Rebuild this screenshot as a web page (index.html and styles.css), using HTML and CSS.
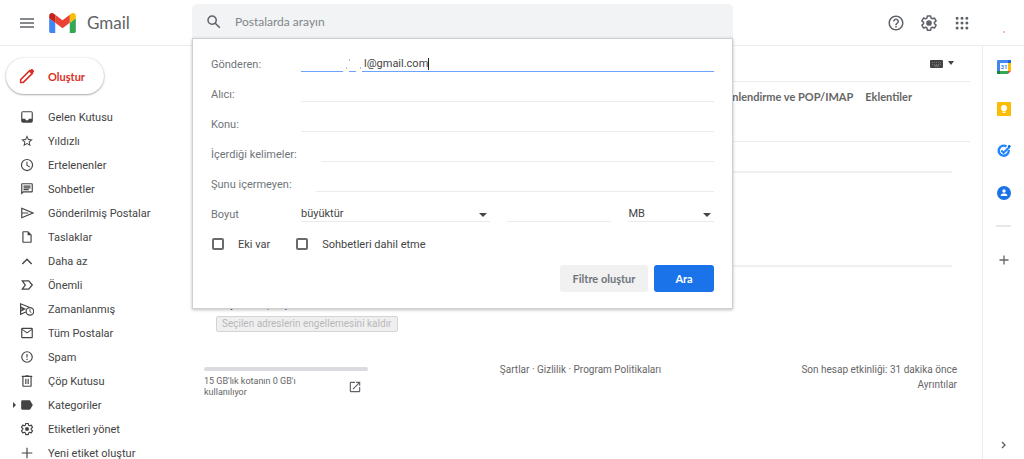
FILE: index.html
```html
<!DOCTYPE html>
<html lang="tr">
<head>
    <meta charset="UTF-8">
    <meta name="viewport" content="width=device-width, initial-scale=1.0">
    <title>Gmail</title>
    <link rel="stylesheet" href="styles.css">
</head>
<body>

    <header class="header">
        <div class="brand">
            <button class="icon-button" aria-label="Ana menü">
                <svg width="16" height="16" viewBox="0 0 16 16"><path d="M1 4h14M1 8h14M1 12h14" stroke="#5f6368" stroke-width="1.500"/></svg>
            </button>
            <a class="logo" href="#">
                <svg width="27" height="20" viewBox="52 42 88 66">
                    <path fill="#4285f4" d="M58 108h14V74L52 59v43c0 3.320 2.690 6 6 6"/>
                    <path fill="#34a853" d="M120 108h14c3.320 0 6-2.690 6-6V59l-20 15"/>
                    <path fill="#fbbc04" d="M120 48v26l20-15v-8c0-7.420-8.470-11.650-14.400-7.200"/>
                    <path fill="#ea4335" d="M72 74V48l24 18 24-18v26L96 92"/>
                    <path fill="#c5221f" d="M52 51v8l20 15V48l-5.600-4.200c-5.940-4.450-14.400-.22-14.400 7.200"/>
                </svg>
                <span>Gmail</span>
            </a>
        </div>

        <form class="search">
            <div class="search-bar">
                <svg width="18" height="18" viewBox="0 0 24 24" fill="#5f6368"><path d="M20.490 19l-5.730-5.730C15.530 12.200 16 10.910 16 9.500A6.500 6.500 0 1 0 9.500 16c1.410 0 2.700-.47 3.770-1.240L19 20.490 20.490 19zM5 9.500C5 7.010 7.010 5 9.500 5S14 7.010 14 9.500 11.990 14 9.500 14 5 11.990 5 9.500z"/></svg>
                <input type="text" placeholder="Postalarda arayın" aria-label="Postalarda arayın">
            </div>

            <div class="search-panel">
                <div class="field">
                    <label for="from">Gönderen:</label>
                    <div class="from-box">
                        <input class="from-input" type="text" id="from" value="l@gmail.com">
                        <svg class="from-marks" width="132" height="18" viewBox="0 0 132 18">
                            <ellipse cx="45" cy="15" rx="3" ry="3" fill="#fff"/>
                            <ellipse cx="58" cy="15" rx="3" ry="3" fill="#fff"/>
                            <path d="M45 12h1M59 12h1M48 4h1" stroke="#777"/>
                            <path d="M127.500 2v12" stroke="#222"/>
                        </svg>
                    </div>
                </div>
                <div class="field">
                    <label for="to">Alıcı:</label>
                    <input type="text" id="to">
                </div>
                <div class="field">
                    <label for="subject">Konu:</label>
                    <input type="text" id="subject">
                </div>
                <div class="field">
                    <label for="has">İçerdiği kelimeler:</label>
                    <input type="text" id="has">
                </div>
                <div class="field">
                    <label for="not">Şunu içermeyen:</label>
                    <input type="text" id="not">
                </div>
                <div class="field size-field">
                    <label for="size-op">Boyut</label>
                    <div class="select-box size-op">
                        <select id="size-op"><option>büyüktür</option><option>küçüktür</option></select>
                    </div>
                    <input type="text" aria-label="Boyut değeri">
                    <div class="select-box size-unit">
                        <select aria-label="Birim"><option>MB</option><option>KB</option></select>
                    </div>
                </div>
                <div class="checks">
                    <label><input type="checkbox">Eki var</label>
                    <label><input type="checkbox">Sohbetleri dahil etme</label>
                </div>
                <div class="actions">
                    <button type="button" class="btn-filter">Filtre oluştur</button>
                    <button type="submit" class="btn-search">Ara</button>
                </div>
            </div>
        </form>

        <div class="header-tools">
            <button class="icon-button" aria-label="Destek">
                <svg width="18" height="18" viewBox="0 0 24 24" fill="#5f6368"><path d="M11 18h2v-2h-2v2zm1-16C6.480 2 2 6.480 2 12s4.480 10 10 10 10-4.480 10-10S17.520 2 12 2zm0 18c-4.410 0-8-3.590-8-8s3.590-8 8-8 8 3.590 8 8-3.590 8-8 8zm0-14c-2.210 0-4 1.790-4 4h2c0-1.100.9-2 2-2s2 .9 2 2c0 2-3 1.750-3 5h2c0-2.250 3-2.500 3-5 0-2.210-1.790-4-4-4z"/></svg>
            </button>
            <button class="icon-button" aria-label="Ayarlar">
                <svg width="18" height="18" viewBox="0 0 24 24"><path d="M9.800 2.500h4.400l.5 2.900 1.800 1 2.800-1 2.200 3.800-2.300 1.900v1.900l2.300 1.900-2.200 3.800-2.800-1-1.800 1-.5 2.900H9.800l-.5-2.900-1.800-1-2.800 1-2.200-3.800 2.300-1.900v-1.900L2.500 9.200l2.200-3.800 2.800 1 1.800-1z" fill="none" stroke="#5f6368" stroke-width="2" stroke-linejoin="round"/><circle cx="12" cy="12" r="3.800" fill="#5f6368"/></svg>
            </button>
            <button class="icon-button" aria-label="Google uygulamaları">
                <svg width="18" height="18" viewBox="0 0 24 24"><path d="M5.500 5.500h0M12 5.500h0M18.500 5.500h0M5.500 12h0M12 12h0M18.500 12h0M5.500 18.500h0M12 18.500h0M18.500 18.500h0" stroke="#5f6368" stroke-width="4" stroke-linecap="round"/></svg>
            </button>
            <span class="avatar"></span>
        </div>
    </header>

    <div class="page">
        <aside class="sidebar">
            <button class="compose">
                <svg width="18" height="18" viewBox="0 0 24 24"><path d="M3.500 20.500v-3.600L15.500 4.900l3.600 3.600-12 12z" fill="none" stroke="#d93025" stroke-width="2"/><path d="M14.500 5.800l2.600-2.600c.8-.8 1.800-.8 2.600 0l1.100 1.100c.8.8.8 1.800 0 2.600l-2.600 2.600z" fill="#d93025"/></svg>
                Oluştur
            </button>
            <nav class="folders">
                <a href="#"><svg viewBox="0 0 24 24"><path d="M19 2H5a3 3 0 0 0-3 3v14a3 3 0 0 0 3 3h14a3 3 0 0 0 3-3V5a3 3 0 0 0-3-3zm1 13h-5a3 3 0 0 1-6 0H4V4h16z"/></svg>Gelen Kutusu</a>
                <a href="#"><svg viewBox="0 0 24 24"><path d="M22 9.240l-7.190-.62L12 2 9.190 8.630 2 9.240l5.460 4.730L5.820 21 12 17.270 18.180 21l-1.630-7.030L22 9.240zM12 15.400l-3.760 2.270 1-4.280-3.320-2.880 4.380-.38L12 6.100l1.710 4.040 4.380.38-3.320 2.880 1 4.280L12 15.400z"/></svg>Yıldızlı</a>
                <a href="#"><svg viewBox="0 0 24 24"><path d="M12 1.500a10.500 10.500 0 1 0 0 21 10.500 10.500 0 0 0 0-21zm0 19a8.500 8.500 0 1 1 0-17 8.500 8.500 0 0 1 0 17zM12.800 6.500H11V13l5.400 3.300.9-1.500-4.500-2.700z"/></svg>Ertelenenler</a>
                <a href="#"><svg viewBox="0 0 24 24"><path d="M4 2h16a2 2 0 0 1 2 2v12a2 2 0 0 1-2 2H6l-4 4V4c0-1.100.9-2 2-2zm0 2v13.200L5.200 16H20V4zM6 12h9v2H6zm0-3h12v2H6zm0-3h12v2H6z"/></svg>Sohbetler</a>
                <a href="#"><svg viewBox="0 0 24 24"><path d="M3 4l19 8-19 8z M4 12h10" fill="none" stroke="#444" stroke-width="2"/></svg>Gönderilmiş Postalar</a>
                <a href="#"><svg viewBox="0 0 24 24"><path d="M14 2H6a2 2 0 0 0-2 2v16a2 2 0 0 0 2 2h12a2 2 0 0 0 2-2V8zm4 18H6V4h7v5h5z"/></svg>Taslaklar</a>
                <a href="#"><svg viewBox="0 0 24 24"><path d="M4 17l8-8 8 8" fill="none" stroke="#444" stroke-width="2.400"/></svg>Daha az</a>
                <a href="#"><svg viewBox="0 0 24 24"><path d="M4 5h11l6 7-6 7H4l5-7z" fill="none" stroke="#444" stroke-width="2.200"/></svg>Önemli</a>
                <a href="#"><svg viewBox="0 0 24 24"><path d="M10 17l-9 4V3l15 6M1 12h9M1 8l7 4-7 4" fill="none" stroke="#444" stroke-width="2"/><circle cx="17" cy="16" r="6.500" fill="#fff" stroke="#444" stroke-width="2"/><path d="M17 12v4.500l2.500 1.500" fill="none" stroke="#444" stroke-width="1.500"/></svg>Zamanlanmış</a>
                <a href="#"><svg viewBox="0 0 24 24"><path d="M20 3H4a2 2 0 0 0-2 2v14a2 2 0 0 0 2 2h16a2 2 0 0 0 2-2V5a2 2 0 0 0-2-2zm0 16H4V7l8 6 8-6zm-8-8.500L4 5h16z"/></svg>Tüm Postalar</a>
                <a href="#"><svg viewBox="0 0 24 24"><path d="M11 15h2v2h-2zm0-8h2v6h-2zm1-5a10 10 0 1 0 0 20 10 10 0 0 0 0-20zm0 18a8 8 0 1 1 0-16 8 8 0 0 1 0 16z"/></svg>Spam</a>
                <a href="#"><svg viewBox="0 0 24 24"><path d="M15 3V2H9v1H3v2h1v15a2 2 0 0 0 2 2h12a2 2 0 0 0 2-2V5h1V3zm3 17H6V5h12zM9 8h2v9H9zm4 0h2v9h-2z"/></svg>Çöp Kutusu</a>
                <a href="#" class="has-children"><svg viewBox="0 0 24 24"><path d="M17.600 4.800C17.300 4.300 16.700 4 16 4H4a2 2 0 0 0-2 2v12a2 2 0 0 0 2 2h12c.7 0 1.300-.3 1.600-.8L22 12z"/></svg>Kategoriler</a>
                <a href="#"><svg viewBox="0 0 24 24"><path d="M9.800 2.500h4.400l.5 2.900 1.800 1 2.800-1 2.200 3.800-2.300 1.900v1.900l2.300 1.900-2.200 3.800-2.800-1-1.800 1-.5 2.900H9.800l-.5-2.900-1.800-1-2.800 1-2.200-3.800 2.300-1.900v-1.900L2.500 9.200l2.200-3.800 2.800 1 1.800-1z" fill="none" stroke="#444" stroke-width="2" stroke-linejoin="round"/><circle cx="12" cy="12" r="3.500"/></svg>Etiketleri yönet</a>
                <a href="#"><svg viewBox="0 0 24 24"><path d="M21 13h-8v8h-2v-8H3v-2h8V3h2v8h8z"/></svg>Yeni etiket oluştur</a>
            </nav>
        </aside>

        <main class="main">
            <div class="toolbar">
                <button class="keyboard" aria-label="Giriş aracı">
                    <svg width="26" height="10" viewBox="0 0 26 10"><rect y="1" width="13" height="8" rx="1" fill="#444"/><path d="M2 3.500h9M2 5.500h9" stroke="#777" stroke-dasharray="1 1"/><path d="M4 7h5" stroke="#888"/><path d="M18 2h6l-3 4z" fill="#444"/></svg>
                </button>
            </div>
            <nav class="tabs">
                <a href="#">Yönlendirme ve POP/IMAP</a>
                <a href="#">Eklentiler</a>
            </nav>
            <div class="settings">
                <div class="setting-row short"></div>
                <div class="setting-row tall"></div>
                <div class="blocked">
                    <p>Seç: <a href="#">Tümü</a>, <a href="#">Hiçbiri</a></p>
                    <button disabled>Seçilen adreslerin engellemesini kaldır</button>
                </div>
            </div>
            <footer class="footer">
                <div class="quota">
                    <div class="quota-bar"></div>
                    <div class="quota-text">
                        <span>15 GB'lık kotanın 0 GB'ı kullanılıyor</span>
                        <a href="#" aria-label="Depolama alanını yönet"><svg width="14" height="14" viewBox="0 0 24 24" fill="#5f6368"><path d="M19 19H5V5h7V3H5a2 2 0 0 0-2 2v14a2 2 0 0 0 2 2h14a2 2 0 0 0 2-2v-7h-2zM14 3v2h3.590l-9.830 9.830 1.410 1.410L19 6.410V10h2V3z"/></svg></a>
                    </div>
                </div>
                <div class="terms"><a href="#">Şartlar</a> · <a href="#">Gizlilik</a> · <a href="#">Program Politikaları</a></div>
                <div class="activity">Son hesap etkinliği: 31 dakika önce<br><a href="#">Ayrıntılar</a></div>
            </footer>
        </main>

        <aside class="rail">
            <a href="#" aria-label="Takvim">
                <svg width="14" height="14" viewBox="0 0 14 14"><rect width="14" height="14" rx="1" fill="#4285f4"/><path d="M11 3h3v8h-3z" fill="#fbbc04"/><path d="M11 0h2a1 1 0 0 1 1 1v2h-3z" fill="#1967d2"/><path d="M3 11h8v3H3z" fill="#34a853"/><path d="M0 11h3v3H1a1 1 0 0 1-1-1z" fill="#188038"/><path d="M11 11h3l-3 3z" fill="#ea4335"/><path d="M14 11v3h-3z" fill="#fff"/><path d="M3 3h8v8H3z" fill="#fff"/><text x="7" y="9" text-anchor="middle">31</text></svg>
            </a>
            <a href="#" aria-label="Keep">
                <svg width="14" height="14" viewBox="0 0 14 14"><rect width="14" height="14" rx="1" fill="#fbbc04"/><circle cx="7" cy="6" r="3" fill="#fff"/><path d="M5.500 8h3v1.500h-3zM5.500 10h3v1h-3z" fill="#fff"/></svg>
            </a>
            <a href="#" aria-label="Görevler">
                <svg width="14" height="14" viewBox="0 0 14 14" fill="none" stroke="#2684fc"><path d="M9.500 2.500A5 5 0 1 0 11.700 6" stroke-width="2.400"/><path d="M4.300 6.500l2.300 2.300L12.500 3" stroke-width="2.200"/><circle cx="12.300" cy="2.300" r="1.300" fill="#0066da" stroke="none"/></svg>
            </a>
            <a href="#" aria-label="Kişiler">
                <svg width="14" height="14" viewBox="0 0 14 14"><circle cx="7" cy="7" r="7" fill="#1a73e8"/><circle cx="7" cy="5" r="1.700" fill="#fff"/><path d="M3.700 10V9.200C3.700 8 5.500 7.400 7 7.400s3.300.6 3.300 1.800v.8z" fill="#fff"/></svg>
            </a>
            <hr>
            <button class="icon-button" aria-label="Eklentileri alın">
                <svg width="10" height="10" viewBox="0 0 10 10"><path d="M5 .5v9M.5 5h9" stroke="#666" stroke-width="1.300"/></svg>
            </button>
            <button class="icon-button rail-toggle" aria-label="Yan paneli gizle">
                <svg width="8" height="8" viewBox="0 0 8 8"><path d="M2 1l3 3-3 3" fill="none" stroke="#5f6368" stroke-width="1.400"/></svg>
            </button>
        </aside>
    </div>

</body>
</html>
```
FILE: styles.css
```css
* {
    box-sizing: border-box;
}

body {
    margin: 0;
    height: 100vh;
    display: flex;
    flex-direction: column;
    overflow: hidden;
    background: #fff;
    color: #444;
    font-family: Roboto, "Liberation Sans", sans-serif;
    font-size: 11px;
}

a {
    color: inherit;
    text-decoration: none;
}

button, input, select {
    font: inherit;
    color: inherit;
}

svg {
    display: block;
    flex-shrink: 0;
}

.icon-button {
    border: none;
    background: none;
    padding: 0;
    display: flex;
    cursor: pointer;
}

/* header */
.header {
    display: flex;
    flex-shrink: 0;
    height: 46px;
    border-bottom: 1px solid #ececec;
}

.brand {
    width: 192px;
    flex-shrink: 0;
    display: flex;
    align-items: center;
    gap: 14px;
    padding-left: 19px;
}

.logo {
    display: flex;
    align-items: center;
    gap: 11px;
    color: #5f6368;
    font-family: Lato, sans-serif;
    font-size: 17px;
}

.search {
    position: relative;
    flex: 1;
    max-width: 541px;
    padding-top: 4px;
}

.search-bar {
    display: flex;
    align-items: center;
    gap: 12px;
    height: 35px;
    padding: 0 13px;
    background: #f1f3f4;
    border-radius: 5px 5px 0 0;
}

.search-bar input {
    flex: 1;
    border: none;
    outline: none;
    padding: 0;
    background: none;
    font-family: Lato, sans-serif;
    font-size: 12px;
}

.search-bar input::placeholder {
    color: #80868b;
}

.header-tools {
    margin-left: auto;
    display: flex;
    align-items: center;
    gap: 15px;
    padding-right: 19px;
}

.avatar {
    width: 2px;
    height: 2px;
    margin: 18px 0 0 17px;
    border-radius: 50%;
    background: #f0a58c;
}

/* advanced search panel */
.search-panel {
    position: absolute;
    top: 38px;
    left: 0;
    right: 0;
    z-index: 5;
    padding: 10px 18px 16px;
    background: #fff;
    border: 1px solid #d0d0d0;
    box-shadow: 0 1px 3px rgba(0, 0, 0, 0.25);
}

.field {
    display: flex;
    align-items: center;
    height: 30px;
    color: #70757a;
}

.field label {
    flex-shrink: 0;
    min-width: 66px;
    margin-right: 24px;
}

.field input, .field select {
    display: block;
    width: 100%;
    min-width: 0;
    height: 16px;
    margin: 0;
    padding: 0;
    background: transparent;
    border: none;
    border-bottom: 1px solid #ebebeb;
    border-radius: 0;
    outline: none;
    color: #444;
    appearance: none;
}

.from-box {
    position: relative;
    flex: 1;
}

.field .from-input {
    padding-left: 63px;
    border-bottom-color: #6ba4f8;
}

.from-marks {
    position: absolute;
    top: 0;
    left: 0;
}

.size-field > input {
    flex: 105;
    margin: 0 17px;
}

.select-box {
    position: relative;
}

.size-op {
    flex: 190;
}

.size-unit {
    flex: 86;
}

.select-box::after {
    content: "";
    position: absolute;
    right: 3px;
    top: 7px;
    border: 4px solid transparent;
    border-top-color: #444;
    border-bottom: none;
}

.checks {
    display: flex;
    align-items: center;
    gap: 25px;
    height: 30px;
}

.checks label {
    display: flex;
    align-items: center;
    gap: 14px;
}

.checks input {
    appearance: none;
    width: 12px;
    height: 12px;
    margin: 0 0 0 1px;
    border: 2px solid #6b6b6b;
    border-radius: 2px;
}

.actions {
    display: flex;
    justify-content: flex-end;
    gap: 6px;
    padding-top: 6px;
}

.actions button {
    height: 27px;
    border: none;
    border-radius: 3px;
    font-family: Lato, sans-serif;
    font-weight: bold;
    cursor: pointer;
}

.btn-filter {
    width: 88px;
    padding: 0;
    background: #f1f1f1;
    color: #70757a;
}

.btn-search {
    width: 60px;
    background: #1a73e8;
    color: #fff;
}

/* body of the page */
.page {
    flex: 1;
    display: flex;
    min-height: 0;
}

.sidebar {
    width: 192px;
    flex-shrink: 0;
    padding-top: 12px;
    overflow: hidden;
}

.compose {
    display: flex;
    align-items: center;
    gap: 12px;
    height: 36px;
    width: 98px;
    margin-left: 6px;
    padding: 0 12px;
    border: none;
    border-radius: 18px;
    background: #fff;
    box-shadow: 0 1px 2px rgba(60, 64, 67, 0.4), 0 0 2px rgba(60, 64, 67, 0.2);
    color: #d93025;
    font-family: Lato, sans-serif;
    font-weight: bold;
    cursor: pointer;
}

.folders {
    padding-top: 11px;
}

.folders a {
    position: relative;
    display: flex;
    align-items: center;
    gap: 14px;
    height: 24px;
    padding-left: 20px;
}

.folders svg {
    width: 14px;
    height: 14px;
    fill: #444;
}

.has-children::before {
    content: "";
    position: absolute;
    left: 13px;
    border: 3px solid transparent;
    border-left-color: #444;
    border-right: none;
}

.main {
    flex: 1;
    min-width: 0;
    padding: 0 12px;
}

.toolbar {
    display: flex;
    justify-content: flex-end;
    align-items: center;
    height: 36px;
    padding-right: 14px;
    border-bottom: 1px solid #ececec;
}

.keyboard {
    border: none;
    background: none;
    padding: 0;
}

.tabs {
    display: flex;
    justify-content: flex-end;
    gap: 12px;
    height: 60px;
    padding: 8px 58px 0 0;
    border-bottom: 1px solid #ececec;
    color: #666;
    font-family: Lato, sans-serif;
    font-weight: bold;
    line-height: 14px;
}

.settings {
    padding-right: 18px;
}

.setting-row {
    border-bottom: 2px solid #f0f0f0;
}

.short {
    height: 31px;
}

.tall {
    height: 94px;
}

.blocked {
    padding: 32px 0 0 12px;
}

.blocked p {
    margin: 0;
    line-height: 12px;
    color: #222;
}

.blocked a {
    color: #15c;
}

.blocked button {
    display: block;
    margin-top: 5px;
    height: 16px;
    padding: 0 5px;
    border: 1px solid #d4d4d4;
    border-radius: 2px;
    background: #efefef;
    color: #b8b8b8;
    font-size: 10px;
    line-height: 14px;
}

.footer {
    display: grid;
    grid-template-columns: 1fr 1fr 1fr;
    padding: 30px 13px 0 0;
    color: #666;
    font-size: 10px;
    line-height: 15px;
}

.quota {
    width: 164px;
    padding-top: 5px;
}

.quota-bar {
    height: 4px;
    border-radius: 2px;
    background: #dadce0;
}

.quota-text {
    display: flex;
    justify-content: space-between;
    align-items: center;
    padding: 5px 6px 0 0;
    font-size: 9px;
    line-height: 11px;
}

.quota-text span {
    width: 110px;
}

.terms {
    text-align: center;
}

.activity {
    text-align: right;
}

/* right side panel */
.rail {
    width: 42px;
    flex-shrink: 0;
    display: flex;
    flex-direction: column;
    align-items: center;
    border-left: 1px solid #ececec;
}

.rail a {
    display: flex;
    align-items: center;
    height: 42px;
}

.rail text {
    font-size: 6px;
    font-weight: bold;
    fill: #4285f4;
}

.rail hr {
    width: 15px;
    margin: 11px 0 28px;
    border: none;
    border-top: 2px solid #e8e8e8;
}

.rail-toggle {
    margin-top: auto;
    margin-bottom: 10px;
}
```
